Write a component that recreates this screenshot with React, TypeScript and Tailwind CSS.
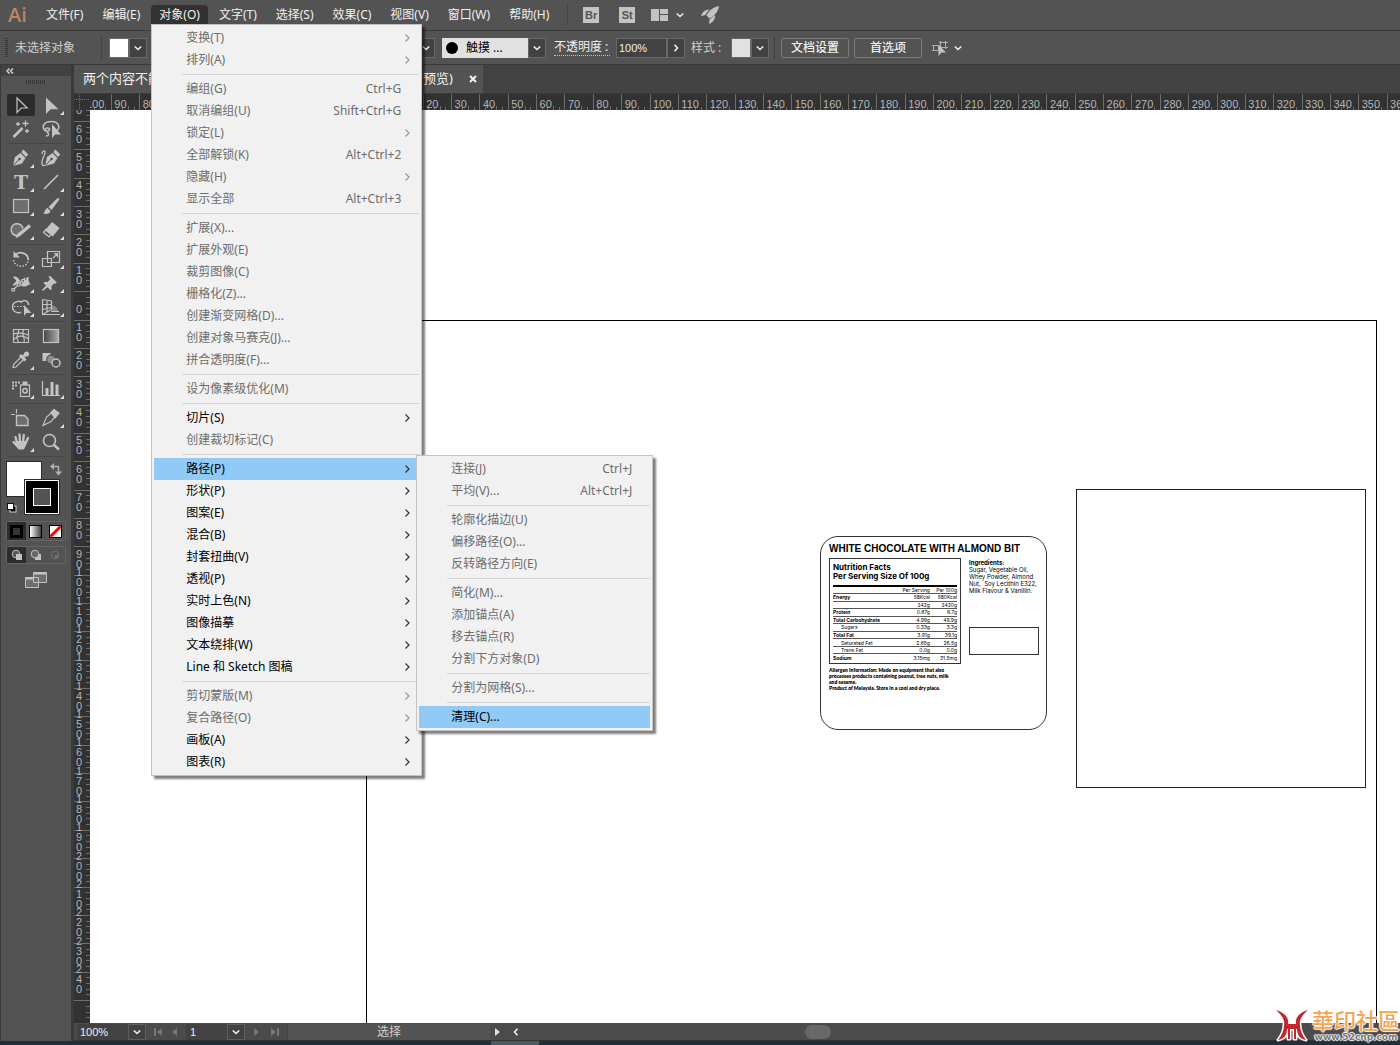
import type { ReactNode } from "react";

type MenuEntry =
  | "-"
  | { label: string; keys?: string; sub?: boolean; enabled?: boolean; active?: boolean; items?: MenuEntry[] };

const pathMenu: MenuEntry[] = [
  { label: "连接(J)", keys: "Ctrl+J" },
  { label: "平均(V)...", keys: "Alt+Ctrl+J" },
  "-",
  { label: "轮廓化描边(U)" },
  { label: "偏移路径(O)..." },
  { label: "反转路径方向(E)" },
  "-",
  { label: "简化(M)..." },
  { label: "添加锚点(A)" },
  { label: "移去锚点(R)" },
  { label: "分割下方对象(D)" },
  "-",
  { label: "分割为网格(S)..." },
  "-",
  { label: "清理(C)...", enabled: true, active: true },
];

const objectMenu: MenuEntry[] = [
  { label: "变换(T)", sub: true },
  { label: "排列(A)", sub: true },
  "-",
  { label: "编组(G)", keys: "Ctrl+G" },
  { label: "取消编组(U)", keys: "Shift+Ctrl+G" },
  { label: "锁定(L)", sub: true },
  { label: "全部解锁(K)", keys: "Alt+Ctrl+2" },
  { label: "隐藏(H)", sub: true },
  { label: "显示全部", keys: "Alt+Ctrl+3" },
  "-",
  { label: "扩展(X)..." },
  { label: "扩展外观(E)" },
  { label: "裁剪图像(C)" },
  { label: "栅格化(Z)..." },
  { label: "创建渐变网格(D)..." },
  { label: "创建对象马赛克(J)..." },
  { label: "拼合透明度(F)..." },
  "-",
  { label: "设为像素级优化(M)" },
  "-",
  { label: "切片(S)", sub: true, enabled: true },
  { label: "创建裁切标记(C)" },
  "-",
  { label: "路径(P)", sub: true, enabled: true, active: true, items: pathMenu },
  { label: "形状(P)", sub: true, enabled: true },
  { label: "图案(E)", sub: true, enabled: true },
  { label: "混合(B)", sub: true, enabled: true },
  { label: "封套扭曲(V)", sub: true, enabled: true },
  { label: "透视(P)", sub: true, enabled: true },
  { label: "实时上色(N)", sub: true, enabled: true },
  { label: "图像描摹", sub: true, enabled: true },
  { label: "文本绕排(W)", sub: true, enabled: true },
  { label: "Line 和 Sketch 图稿", sub: true, enabled: true },
  "-",
  { label: "剪切蒙版(M)", sub: true },
  { label: "复合路径(O)", sub: true },
  { label: "画板(A)", sub: true, enabled: true },
  { label: "图表(R)", sub: true, enabled: true },
];

const menuBar = ["文件(F)", "编辑(E)", "对象(O)", "文字(T)", "选择(S)", "效果(C)", "视图(V)", "窗口(W)", "帮助(H)"];

// distance between two numbered ruler marks
const STEP = 28.35;

const nutrition = [
  { name: "Energy", serving: "58Kcal", per100: "580Kcal", bold: true },
  { name: "", serving: "242g", per100: "2420g" },
  { name: "Protein", serving: "0.67g", per100: "6.7g", bold: true },
  { name: "Total Carbohydrate", serving: "4.99g", per100: "49.9g", bold: true },
  { name: "Sugars", serving: "0.33g", per100: "3.3g", indent: true },
  { name: "Total Fat", serving: "3.91g", per100: "39.1g", bold: true },
  { name: "Saturated Fat", serving: "2.65g", per100: "26.5g", indent: true },
  { name: "Trans Fat", serving: "0.0g", per100: "0.0g", indent: true },
  { name: "Sodium", serving: "3.15mg", per100: "31.5mg", bold: true },
];

export default function App() {
  return (
    <div className="flex h-screen flex-col overflow-hidden bg-[#535353] font-['Noto_Sans','Noto_Sans_CJK_SC',sans-serif] text-xs text-[#f0f0f0]">
      <MenuBar />
      <ControlBar />
      <div className="flex min-h-0 flex-1">
        <Toolbox />
        <main className="flex min-w-0 flex-1 flex-col">
          <DocumentTab />
          <div className="flex h-4 shrink-0 bg-[#323232]">
            <svg className="h-4 w-4 shrink-0" stroke="#6d6d6d" strokeDasharray="1 1">
              <path d="M5.5 0v16M0 5.5h16" />
            </svg>
            <HorizontalRuler />
          </div>
          <div className="flex min-h-0 flex-1">
            <VerticalRuler />
            <Canvas />
          </div>
          <StatusBar />
        </main>
      </div>
      <div className="flex h-1 shrink-0 bg-[#1c3040]">
        <div className="ml-[491px] w-12 bg-[#4a5b68]" />
      </div>
      <Watermark />
    </div>
  );
}

function Chevron({ className = "" }: { className?: string }) {
  return (
    <svg className={`h-2 w-2 shrink-0 ${className}`} viewBox="0 0 8 8" fill="none" stroke="#f0f0f0" strokeWidth="1.6">
      <path d="M.8 2.5 4 5.5l3.2-3" />
    </svg>
  );
}

function MenuBar() {
  return (
    <header className="flex h-[31px] shrink-0 items-center border-b border-[#3a3a3a] pl-2">
      <span className="w-[30px] font-['Open_Sans',sans-serif] text-xl leading-none font-semibold text-[#bf8461]">Ai</span>
      <nav className="flex h-full gap-[3px]">
        {menuBar.map((name) => (
          <div key={name} className="relative flex h-full items-center">
            <button
              className={`h-5 rounded-t-sm px-2 whitespace-nowrap ${name === "对象(O)" ? "bg-[#323232]" : ""}`}
            >
              {name}
            </button>
            {name === "对象(O)" && (
              <div className="absolute top-6 left-0 z-20">
                <MenuList items={objectMenu} className="w-[271px]" />
              </div>
            )}
          </div>
        ))}
      </nav>
      <div className="ml-2.5 h-5 w-px bg-[#424242]" />
      <button className="ml-[15px] h-4 w-4 bg-[#c3c3c3] font-['Liberation_Sans',sans-serif] text-[11px] leading-4 font-bold text-[#535353]">Br</button>
      <button className="ml-5 h-4 w-4 bg-[#c3c3c3] font-['Liberation_Sans',sans-serif] text-[11px] leading-4 font-bold text-[#535353]">St</button>
      <button aria-label="排列文档" className="ml-4 flex items-center gap-2">
        <svg className="h-3 w-[17px]" fill="#c3c3c3">
          <path d="M0 0h8v12H0zM9 0h8v5H9zM9 6h8v6H9z" />
        </svg>
        <Chevron />
      </button>
      <button aria-label="GPU" className="ml-4">
        <svg className="h-5 w-5" fill="#c3c3c3">
          <path d="M19 1C13 2 9 5.500 6.500 10.500l3 3C14.500 11 18 7 19 1zM9.500 4.500C5.500 4 2 7.500 1 11l4.500-1c1-2 2.300-4 4-5.500zM15 10l-5.500 4.500-.5 4.500c4-1.500 6.500-5 6-9z" />
        </svg>
      </button>
    </header>
  );
}

function MenuList({ items, className }: { items: MenuEntry[]; className: string }) {
  return (
    <ul
      className={`border border-[#c4c4c4] bg-[#f1f1f1] py-0.5 shadow-[3px_3px_2px_rgba(0,0,0,0.5)] ${className}`}
    >
      {items.map((item, index) =>
        item === "-" ? (
          <li key={index} className="mr-0.5 ml-[30px] py-[3px]">
            <hr className="border-[#d5d5d5]" />
          </li>
        ) : (
          <li key={index} className="relative px-0.5">
            <button
              className={`flex h-[22px] w-full items-center pr-[7px] pl-8 text-left whitespace-nowrap ${
                item.enabled ? "text-black" : "text-[#6d6d6d]"
              } ${item.active ? "bg-[#91c9f7]" : ""}`}
            >
              <span className="flex-1">{item.label}</span>
              {item.keys && <span className="mr-[11px]">{item.keys}</span>}
              {item.sub && (
                <svg
                  className="h-2 w-2"
                  fill="none"
                  stroke={item.enabled ? "#333" : "#999"}
                  strokeWidth="1.2"
                >
                  <path d="M1.500.5 5 4 1.500 7.500" />
                </svg>
              )}
            </button>
            {item.items && (
              <div className="absolute -top-[3px] left-[264px] z-10">
                <MenuList items={item.items} className="w-[237px]" />
              </div>
            )}
          </li>
        )
      )}
    </ul>
  );
}

function DropButton({ label }: { label: string }) {
  return (
    <button aria-label={label} className="flex h-5 w-[18px] items-center justify-center border border-[#686868] bg-[#424242]">
      <Chevron />
    </button>
  );
}

function ControlBar() {
  return (
    <div className="flex h-[34px] shrink-0 items-center border-b border-[#3a3a3a] pl-[5px] whitespace-nowrap">
      <svg className="h-5 w-[3px]" stroke="#383838" strokeDasharray="1 1">
        <path d="M1.500 0v20" strokeWidth="3" />
      </svg>
      <span className="ml-[7px] w-[86px] text-[#cfcfcf]">未选择对象</span>
      <div className="h-6 w-px bg-[#424242]" />
      <button aria-label="填色" className="ml-[7px] h-5 w-5 border border-[#686868] bg-white" />
      <DropButton label="填色选项" />
      <div className="w-[270px]" />
      <DropButton label="描边选项" />
      <button className="ml-[7px] flex h-5 w-[86px] items-center gap-2 bg-[#e1e1e1] pl-1 text-black">
        <span className="h-3 w-3 rounded-full bg-black" />
        触摸 ...
      </button>
      <DropButton label="画笔选项" />
      <label htmlFor="opacity" className="ml-2 w-14 border-b border-dotted border-[#c3c3c3] leading-4">
        不透明度 :
      </label>
      <input
        id="opacity"
        defaultValue="100%"
        className="ml-1.5 h-5 w-[51px] border border-[#686868] bg-[#424242] px-0.5 font-['Liberation_Sans',sans-serif] text-[11px]"
      />
      <button aria-label="不透明度选项" className="flex h-5 w-[18px] items-center justify-center border border-[#686868] bg-[#424242]">
        <Chevron className="-rotate-90" />
      </button>
      <span className="ml-1.5 w-10 text-[#cfcfcf]">样式 :</span>
      <button aria-label="样式" className="h-5 w-5 border border-[#686868] bg-[#e1e1e1]" />
      <DropButton label="样式选项" />
      <div className="ml-[5px] h-6 w-px bg-[#424242]" />
      <button className="ml-1.5 h-5 w-[68px] rounded-xs border border-[#7c7c7c] font-medium">文档设置</button>
      <button className="ml-[5px] h-5 w-[68px] rounded-xs border border-[#7c7c7c] font-medium">首选项</button>
      <button aria-label="选择类似的对象" className="ml-2.5 flex items-center gap-1.5">
        <svg className="h-4 w-4" fill="none" stroke="#b0b0b0">
          <path d="M1.500 5.500h5v5h-5zM8.500 2.500h5v5h-5zM0 5.500h2M0 10.500h2M7 2.500h9M7 7.500h9M8.500 1v8M13.500 1v8" />
          <path d="M6.500 4.500V16l3-3.500h4.500z" fill="#c3c3c3" stroke="none" />
        </svg>
        <Chevron />
      </button>
    </div>
  );
}

function DocumentTab() {
  return (
    <div className="flex h-[29px] shrink-0 border-b border-[#3a3a3a] bg-[#424242]">
      <div className="flex w-[409px] items-center bg-[#535353] pr-0.5 pl-[9px] text-[13px]">
        <span className="flex-1">两个内容不能</span>
        <span>和预览)</span>
        <button aria-label="关闭" className="ml-3 flex h-4 w-4 items-center justify-center">
          <svg className="h-2 w-2" stroke="#f0f0f0" strokeWidth="2">
            <path d="m1 1 6 6M7 1 1 7" />
          </svg>
        </button>
      </div>
    </div>
  );
}

function HorizontalRuler() {
  const count = Math.floor((window.innerWidth - 90) / STEP);
  const marks = Array.from({ length: count + 1 }, (_, i) => i - 10);
  return (
    <svg
      className="h-4 min-w-0 flex-1 font-['Liberation_Sans',sans-serif] text-[11px]"
      fill="#b4b4b4"
      shapeRendering="crispEdges"
    >
      {marks.map((n) => {
        const x = 276.5 + n * STEP;
        return (
          <g key={n}>
            <path
              d={`M${x} 0v16M${x + 5.67} 13v3M${x + 11.34} 13v3M${x + 17} 12v4M${x + 22.7} 13v3`}
              stroke="#6d6d6d"
            />
            <text x={x + 3} y="14">{Math.abs(n * 10)}</text>
          </g>
        );
      })}
    </svg>
  );
}

function VerticalRuler() {
  const marks = Array.from({ length: 32 }, (_, i) => i - 8);
  return (
    <svg
      className="h-full w-4 shrink-0 bg-[#323232] font-['Liberation_Sans',sans-serif] text-[11px]"
      fill="#b4b4b4"
      textAnchor="middle"
      shapeRendering="crispEdges"
    >
      {marks.map((n) => {
        const y = 210 + n * STEP;
        const digits = String(Math.abs((n + 1) * 10)).split("");
        return (
          <g key={n}>
            <path
              d={`M0 ${y}h16M12 ${y + 5.67}h4M12 ${y + 11.34}h4M12 ${y + 17}h4M12 ${y + 22.7}h4`}
              stroke="#6d6d6d"
            />
            {digits.map((digit, i) => (
              <text key={i} x="5" y={y + 21 - (digits.length - 1 - i) * 10}>{digit}</text>
            ))}
          </g>
        );
      })}
      <path d="M0 890.5h16M12 896h4M12 902h4M12 907h4" stroke="#6d6d6d" />
    </svg>
  );
}

function Canvas() {
  return (
    <div className="relative min-w-0 flex-1 overflow-hidden bg-white text-black">
      <div className="absolute top-[210px] -bottom-2 left-[276px] w-[1011px] border border-black" />
      <div className="absolute top-[379px] left-[986px] h-[299px] w-[290px] border border-[#222]" />
      <ProductLabel />
    </div>
  );
}

function ProductLabel() {
  return (
    <article className="absolute top-[426px] left-[730px] h-[194px] w-[227px] rounded-[18px] border border-[#333] px-2 pt-1.5 font-['Inter',sans-serif]">
      <h2 className="font-['Liberation_Sans',sans-serif] text-[10px] leading-[11px] font-bold whitespace-nowrap">
        WHITE CHOCOLATE WITH ALMOND BIT
      </h2>
      <div className="mt-1 flex gap-2">
        <div className="h-[106px] w-[132px] shrink-0 border border-[#333] px-[3px] pt-1">
          <h3 className="text-[8px] leading-[9px] font-bold whitespace-nowrap">
            Nutrition Facts
            <br />
            Per Serving Size Of 100g
          </h3>
          <table className="mt-1 h-[76px] w-full border-t-2 border-black text-[5px] leading-[6px] whitespace-nowrap">
            <thead>
              <tr className="text-right">
                <td />
                <th className="font-normal">Per Serving</th>
                <th className="font-normal">Per 100g</th>
              </tr>
            </thead>
            <tbody>
              {nutrition.map((row, index) => (
                <tr key={index} className="border-t border-[#555] text-right">
                  <th className={`text-left ${row.bold ? "font-bold" : "font-normal"} ${row.indent ? "pl-2" : ""}`}>
                    {row.name}
                  </th>
                  <td>{row.serving}</td>
                  <td>{row.per100}</td>
                </tr>
              ))}
            </tbody>
          </table>
        </div>
        <div className="pt-px">
          <p className="text-[6px] leading-[7px] whitespace-nowrap">
            <b>Ingredients:</b>
            <br />
            Sugar, Vegetable Oil,
            <br />
            Whey Powder, Almond
            <br />
            Nut,&nbsp; Soy Lecithin E322,
            <br />
            Milk Flavour &amp; Vanillin.
          </p>
          <div className="mt-[33px] h-7 w-[70px] border border-[#333]" />
        </div>
      </div>
      <div className="mt-[3px] font-['Lato',sans-serif] text-[5px] leading-[6px] font-extrabold whitespace-nowrap">
        <p>
          Allergen Information: Made on equipment that also
          <br />
          processes products containing peanut, tree nuts, milk
          <br />
          and sesame.
        </p>
        <p>Product of Malaysia. Store in a cool and dry place.</p>
      </div>
    </article>
  );
}

function StatusBar() {
  return (
    <footer className="flex h-[18px] shrink-0 items-center border-b border-[#333] bg-[#4b4b4b] pl-[3px] font-['Liberation_Sans','Noto_Sans_CJK_SC',sans-serif] text-[11px]">
      <input aria-label="缩放" defaultValue="100%" className="h-4 w-[51px] bg-[#424242] px-[3px]" />
      <button aria-label="缩放选项" className="flex h-4 w-[18px] items-center justify-center border border-[#5e5e5e] bg-[#424242]">
        <Chevron />
      </button>
      <button aria-label="首个画板" className="ml-2">
        <svg className="h-2 w-2" fill="#777"><path d="M0 0h2v8H0zM8 0v8L3 4z" /></svg>
      </button>
      <button aria-label="上一画板" className="ml-2.5">
        <svg className="h-2 w-2" fill="#777"><path d="M5 0v8L0 4z" /></svg>
      </button>
      <input aria-label="画板" defaultValue="1" className="ml-1.5 h-4 w-[41px] bg-[#424242] px-1" />
      <button aria-label="画板选项" className="flex h-4 w-[18px] items-center justify-center border border-[#5e5e5e] bg-[#424242]">
        <Chevron />
      </button>
      <button aria-label="下一画板" className="ml-2">
        <svg className="h-2 w-2" fill="#777"><path d="M1 0v8l5-4z" /></svg>
      </button>
      <button aria-label="最后画板" className="ml-2.5">
        <svg className="h-2 w-2" fill="#777"><path d="M0 0v8l5-4zM6 0h2v8H6z" /></svg>
      </button>
      <div className="ml-2 flex h-4 w-[203px] items-center justify-center border-l border-[#444] bg-[#535353] text-xs text-[#cfcfcf]">
        选择
      </div>
      <button aria-label="状态选项" className="flex h-4 w-4 items-center justify-center">
        <svg className="h-2 w-2" fill="#e0e0e0"><path d="M1 0v8l5-4z" /></svg>
      </button>
      <button aria-label="向左滚动" className="ml-1.5">
        <Chevron className="rotate-90" />
      </button>
      <div className="flex-1">
        <div className="ml-[285px] h-3.5 w-[26px] rounded-full bg-[#686868]" />
      </div>
    </footer>
  );
}

function Tool({ label, active, flyout, children }: { label: string; active?: boolean; flyout?: boolean; children: ReactNode }) {
  return (
    <button aria-label={label} className="h-6 w-[30px]">
      <svg className="h-6 w-[30px]" fill="none" stroke="#c3c3c3" strokeWidth="1.2">
        {active && <rect x="1" y="1" width="28" height="22" rx="2" fill="#2c2c2c" stroke="none" />}
        {children}
        {flyout && <path d="M28 18v4h-4z" fill="#dcdcdc" stroke="none" />}
      </svg>
    </button>
  );
}

function Nib() {
  return (
    <>
      <path d="m7 20 2-9 5.500-4 5 5-3.500 5.500z" fill="#c3c3c3" stroke="none" />
      <path d="m15.300 6.300 2-2.800 5 5-2.300 2.500z" fill="#c3c3c3" stroke="none" />
      <path d="m7 20 6-6.500" stroke="#535353" strokeWidth="1" />
      <circle cx="13.500" cy="13" r="1.300" fill="#535353" stroke="none" />
    </>
  );
}

function Divider() {
  return (
    <div className="px-px py-0.5">
      <div className="h-px bg-[#464646]" />
    </div>
  );
}

function Toolbox() {
  return (
    <aside className="flex w-[74px] shrink-0 flex-col border-r-[3px] border-l border-[#3a3a3a]">
      <div className="flex h-[11px] items-center bg-[#424242] pl-[5px]">
        <svg className="h-1.5 w-2" fill="none" stroke="#d0d0d0" strokeWidth="1.5">
          <path d="M3.500.5 1 3l2.500 2.500M7 .5 4.500 3 7 5.500" />
        </svg>
      </div>
      <div className="flex h-[17px] items-start pt-1 pl-[25px]">
        <svg className="h-1 w-5">
          <path d="M0 2h20" stroke="#383838" strokeWidth="4" strokeDasharray="1 1" />
        </svg>
      </div>
      <div className="px-[5px]">
        <div className="grid grid-cols-2">
          <Tool label="选择工具" active>
            <path d="M11 5v14.500l4.200-4.500h6z" />
          </Tool>
          <Tool label="直接选择工具" flyout>
            <path d="M10 4.500v16.500l4.500-4.800h8z" fill="#c3c3c3" stroke="none" />
          </Tool>
          <Tool label="魔棒工具">
            <path d="m7.500 20 9-9" strokeWidth="2.600" />
            <path d="M19.500 3.500v6M16.500 6.500h6M12 5v4M10 7h4M21 12v4M19 14h4" strokeWidth="1.300" />
          </Tool>
          <Tool label="套索工具">
            <path d="M20 14c5-3 3-9.500-4.500-9.500S6 9 8 12.500c1 2 5 2.500 5.500 0 .2-2-3.500-2.200-4-.3-.5 2 3 3 3 5 0 1.500-1.500 2-2.500 1.500" strokeWidth="1.500" />
            <path d="M16 7v14l3-3.500h6z" fill="#c3c3c3" stroke="none" />
          </Tool>
        </div>
        <Divider />
        <div className="grid grid-cols-2">
          <Tool label="钢笔工具" flyout><Nib /></Tool>
          <Tool label="曲率工具">
            <g transform="translate(2 0)"><Nib /></g>
            <path d="M6 8c0-3 3-4.500 3-1.500S5 14 6 18c.5 2 2 2 3.500 1" strokeWidth="1.300" />
          </Tool>
          <Tool label="文字工具" flyout>
            <text x="15" y="19" textAnchor="middle" fill="#c3c3c3" stroke="none" fontFamily="DejaVu Serif" fontWeight="bold" fontSize="19">T</text>
          </Tool>
          <Tool label="直线段工具" flyout><path d="M8 19 22 5" strokeWidth="1.600" /></Tool>
          <Tool label="矩形工具" flyout><rect x="7.500" y="5.500" width="15" height="13" fill="#6e6e6e" /></Tool>
          <Tool label="画笔工具" flyout>
            <path d="M7 19.500c2-.5 1.500-4.500 4.500-5.500l3 3c-.5 3-4.500 3.500-7.500 2.500zM12.500 13 20 5.500c1.500-1.300 4-2 3 .5L15.500 16z" fill="#c3c3c3" stroke="none" />
          </Tool>
          <Tool label="Shaper 工具" flyout>
            <path d="M12.500 17.500a6 6 0 1 1 4.500-7" fill="#6e6e6e" strokeWidth="1.500" />
            <path d="m12 17.500 12-10" strokeWidth="3.400" />
            <path d="m9.500 20 1-3.500 2.500 2.500z" fill="#c3c3c3" stroke="none" />
          </Tool>
          <Tool label="橡皮擦工具" flyout>
            <path d="m16 4 7.500 6-6.800 8.500-7.700-6z" fill="#c3c3c3" stroke="none" />
            <path d="m10.300 11-2.800 3.300 5.500 4.500 2.800-3.400z" />
          </Tool>
        </div>
        <Divider />
        <div className="grid grid-cols-2">
          <Tool label="旋转工具" flyout>
            <path d="M9 8c5-5 14-1 13 5" strokeWidth="1.800" />
            <path d="M7.500 13c1 7 12 9 14.500 1.500" strokeDasharray="1.500 1.500" strokeWidth="1.500" />
            <path d="M7.500 4v6.500H14z" fill="#c3c3c3" stroke="none" />
          </Tool>
          <Tool label="比例缩放工具" flyout>
            <path d="M6.500 11.500h9v8h-9zM11.500 4.500h12v11h-12zM17 11l4-4M18 6.700h3.500v3.500" />
          </Tool>
          <Tool label="宽度工具" flyout>
            <path d="M7 6c5-2.500 6 5 10 4.500 3-.5 3-6 6-4-1.500 2 .5 5 1.500 7-2-.5-3 2-6 2-4 0-4-3-7-2.500-2 .3-3 2.500-4.500 1.500 0-2.500 3.500-3 3-5-.3-1.500-2-1.500-3-3.500z" fill="#c3c3c3" stroke="none" />
            <path d="M8 18.500 19 7.500" stroke="#535353" strokeWidth="2.500" />
            <path d="M7.500 18.500 19 7" />
            <path d="M6 17.500h2.500V20H6zM16 8.500h2.500V11H16zM11.500 12.500H14V15h-2.500z" fill="#535353" />
          </Tool>
          <Tool label="操控变形工具" flyout>
            <path d="m13.800 4.500 7 7-1.500 1.200-1.300-.2-2.500 2.500.2 3-1.200 1.200-3.100-3L7 20l-1-1 4-4.500L7.500 12l1.200-1.200 3 .2 2.200-2.500-.3-1.500-1.200-1z" fill="#c3c3c3" stroke="none" />
          </Tool>
          <Tool label="形状生成器工具" flyout>
            <path d="M15 17c-2 1.500-8.500.5-8.500-5S13 5.500 15.500 7c2.500-3 7-1 7 3" strokeWidth="1.500" />
            <path d="M8 11.500h10" strokeDasharray="1.500 1.500" />
            <path d="M18 10v11l2.500-3h5z" fill="#c3c3c3" stroke="none" />
          </Tool>
          <Tool label="透视网格工具" flyout>
            <path d="M16 10v6h6c-.5-3-3-5.500-6-6z" fill="#858585" stroke="none" />
            <path d="M6.500 4.500v15h17.500M6.500 4.500l9 1.500v8.500l-9 5M6.500 9.500h9M6.500 14.500l9-2M11 5.300v11.700M15 16.500h8" />
          </Tool>
        </div>
        <Divider />
        <div className="grid grid-cols-2">
          <Tool label="网格工具">
            <path d="M7.500 5.500h15v13h-15zM7.500 10c6-2 10-1 15 1M7.500 16c4-5 10-5 15-1M13 5.500c-1 5-4 8 0 13M18 5.500c-4 5 2 8 0 13" />
          </Tool>
          <Tool label="渐变工具">
            <defs>
              <linearGradient id="tool-gradient"><stop stopColor="#444" /><stop offset="1" stopColor="#aaa" /></linearGradient>
            </defs>
            <rect x="7.500" y="5.500" width="15" height="13" fill="url(#tool-gradient)" />
          </Tool>
          <Tool label="吸管工具" flyout>
            <path d="m16 8-8.500 8.500-.5 3 3-.5 8.500-8.500" />
            <path d="M14 7l5.500 5.500M16.500 9.500l4.500-4.500" strokeWidth="3" />
            <circle cx="20.500" cy="6" r="2.500" fill="#c3c3c3" stroke="none" />
          </Tool>
          <Tool label="混合工具">
            <path d="M6.500 5h8v8h-8z" fill="#c3c3c3" stroke="none" />
            <circle cx="15" cy="11.500" r="4.300" fill="#8d8d8d" stroke="#535353" />
            <circle cx="20" cy="15" r="4" fill="#535353" strokeWidth="1.500" />
          </Tool>
        </div>
        <Divider />
        <div className="grid grid-cols-2">
          <Tool label="符号喷枪工具" flyout>
            <path d="M6 5.500h8M6 8.500h5M6 11.500h2.500" strokeDasharray="2 1" strokeWidth="2" />
            <rect x="14.500" y="8" width="9" height="11.500" />
            <path d="M16.500 4.500h5V8h-5z" fill="#c3c3c3" stroke="none" />
            <circle cx="19" cy="13.700" r="2.200" strokeWidth="1.500" />
          </Tool>
          <Tool label="柱形图工具" flyout>
            <path d="M6.500 4v14.500H24" />
            <path d="M9.500 11h3v7h-3zM14.500 5h3v13h-3zM19.500 7.500h3V18h-3z" fill="#c3c3c3" stroke="none" />
          </Tool>
        </div>
        <Divider />
        <div className="grid grid-cols-2">
          <Tool label="画板工具">
            <path d="M10.500 9.500h8l3.500 3.500v6.500H10.500z" fill="#6e6e6e" strokeWidth="1.400" />
            <path d="M10.500 3v4.500M5 8.500h4" />
          </Tool>
          <Tool label="切片工具" flyout>
            <path d="m7 19.500 3.500-8.500 5-4 3.500 3.500-4 5z" />
            <path d="m15 6.500 3-3 5 3.500-4 5z" fill="#c3c3c3" />
          </Tool>
          <Tool label="抓手工具" flyout>
            <path d="M11 13 9.500 7M14 12l-.5-7.500M17 12l.8-7M19.500 13.500 22 8M11.500 16.500 7.500 12" strokeWidth="2.300" strokeLinecap="round" />
            <path d="M10 11h10.500c.5 4-1.500 6-2.500 8.500h-5.500c-1-2-3-4-3.500-6z" fill="#c3c3c3" stroke="none" />
          </Tool>
          <Tool label="缩放工具">
            <circle cx="13.500" cy="10.500" r="6" strokeWidth="1.600" />
            <path d="m18 15 5 4.500" strokeWidth="2.500" />
          </Tool>
        </div>
        <Divider />
      </div>
      <Swatches />
    </aside>
  );
}

function Swatches() {
  return (
    <div className="flex flex-col px-[5px]">
      {/* overlapping fill and stroke boxes */}
      <svg className="h-[60px] w-[60px]" fill="none">
        <rect x=".5" y="2.500" width="35" height="35" fill="#fff" stroke="#2c2c2c" />
        <rect x="18.500" y="20.500" width="35" height="35" fill="#fff" stroke="#2c2c2c" />
        <rect x="20" y="22" width="32" height="32" fill="#000" />
        <rect x="27.500" y="29.500" width="17" height="17" fill="#535353" stroke="#fff" />
        <path d="M46.500 7.500h6v6" stroke="#b0b0b0" strokeWidth="1.500" />
        <path d="m48 4-4 3.500 4 3.500zM49 12.500l3.500 4 3.500-4z" fill="#b0b0b0" />
        <rect x="4" y="47" width="6" height="6" fill="#000" stroke="#d0d0d0" />
        <rect x="1.500" y="44.500" width="6" height="6" fill="#fff" stroke="#111" />
      </svg>
      <div className="mt-0.5 grid h-5 w-[60px] grid-cols-3 rounded-xs border border-[#646464]">
        <button aria-label="颜色" className="flex items-center justify-center bg-[#2c2c2c]">
          <span className="h-[13px] w-[13px] border-3 border-black bg-[#333]" />
        </button>
        <button aria-label="渐变" className="flex items-center justify-center">
          <span className="h-[13px] w-[13px] border border-black bg-linear-to-r from-white to-[#444]" />
        </button>
        <button aria-label="无" className="flex items-center justify-center">
          <svg className="h-[13px] w-[13px]">
            <rect x=".5" y=".5" width="12" height="12" fill="#fff" stroke="#000" />
            <path d="M1.500 11.500l10-10" stroke="#f00" strokeWidth="3" />
          </svg>
        </button>
      </div>
      <div className="mt-[5px] grid h-[18px] w-[60px] grid-cols-3 rounded-xs border border-[#646464]">
        <button aria-label="正常绘图" className="flex items-center justify-center bg-[#2c2c2c]">
          <svg className="h-3 w-3">
            <circle cx="5" cy="5" r="3.800" fill="#555" stroke="#c3c3c3" />
            <path d="M5 5h6v6H5z" fill="#c3c3c3" />
          </svg>
        </button>
        <button aria-label="背面绘图" className="flex items-center justify-center">
          <svg className="h-3 w-3">
            <path d="M5 5h6v6H5z" fill="#c3c3c3" />
            <circle cx="5" cy="5" r="3.800" fill="#666" stroke="#c3c3c3" />
          </svg>
        </button>
        <button aria-label="内部绘图" className="flex items-center justify-center">
          <svg className="h-3 w-3">
            <circle cx="6" cy="6" r="3.800" fill="none" stroke="#727272" />
            <path d="M6 6h3v3H6z" fill="#727272" />
          </svg>
        </button>
      </div>
      <button aria-label="更改屏幕模式" className="mt-2 ml-[19px] h-4 w-[22px]">
        <svg className="h-4 w-[22px]" fill="#6e6e6e" stroke="#c3c3c3">
          <path d="M.5 5.500h13v10H.5zM8.500.5h13v10h-13z" />
          <path d="M.5 6.500h8M8.500 1.500h13" strokeWidth="2" />
        </svg>
      </button>
    </div>
  );
}

function Watermark() {
  return (
    <a href="#home" className="absolute right-0 bottom-0.5 z-30 flex items-end gap-0.5">
      <svg className="h-9 w-9" viewBox="0 0 36 36" fill="none" strokeLinejoin="round">
        <path
          d="M2 3c10 3 13 9 12 14h8c-1-5 2-11 12-14-7 6-9 11-8 15 0 5 2 10 6 15-6-1-9-5-9-11h-1v10h-2V22h-4v10h-2V22h-1c0 6-3 10-9 11 4-5 6-10 6-15 1-4-1-9-8-15z"
          fill="#c4262e"
          stroke="#fff"
          strokeWidth="3"
          paintOrder="stroke"
        />
      </svg>
      <span className="flex flex-col items-center">
        <span className="font-['Noto_Sans_CJK_TC',sans-serif] text-[22px] leading-6 font-medium text-[#f2a654] [text-shadow:1px_0_1px_#fff,-1px_0_1px_#fff,0_1px_1px_#fff,0_-1px_1px_#fff]">
          華印社區
        </span>
        <span className="font-['DejaVu_Sans',sans-serif] text-[9px] leading-3 font-bold text-[#777] [text-shadow:1px_0_1px_#fff,-1px_0_1px_#fff,0_1px_1px_#fff,0_-1px_1px_#fff]">
          www.52cnp.com
        </span>
      </span>
    </a>
  );
}
